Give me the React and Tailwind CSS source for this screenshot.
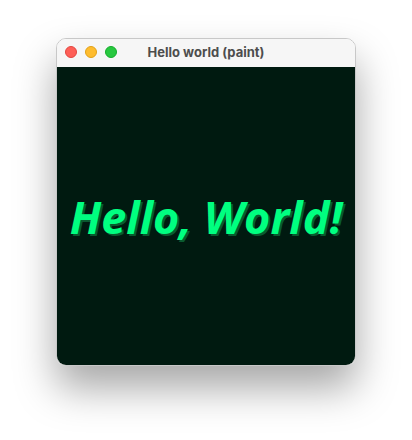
export default function App() {
  return (
    <div className="flex h-[440px] w-[412px] justify-center bg-white pt-[38px]">
      <div className="flex h-[328px] w-[300px] flex-col overflow-hidden rounded-[10px] border border-[#c8c8c8] shadow-[0_22px_40px_rgba(0,0,0,0.35)]">
        <div className="relative flex h-[28px] shrink-0 items-center justify-center bg-[#f6f6f6]">
          <div className="absolute left-[8px] top-[7px] flex gap-[8px]">
            <span className="h-[12px] w-[12px] rounded-full border border-[#e2463f] bg-[#fe5f57]" />
            <span className="h-[12px] w-[12px] rounded-full border border-[#e1a116] bg-[#febc2e]" />
            <span className="h-[12px] w-[12px] rounded-full border border-[#14ad2a] bg-[#28c840]" />
          </div>
          <span className="text-[13px] font-bold text-[#4d4d4d] [font-family:Inter,sans-serif]">
            Hello world (paint)
          </span>
        </div>
        <div className="flex flex-1 items-center justify-center bg-[#001a10]">
          <span className="text-[45px] font-bold italic leading-none text-[#00ff80] [font-family:'Open_Sans',sans-serif] [text-shadow:2px_2px_0_#0a5a30]">
            Hello, World!
          </span>
        </div>
      </div>
    </div>
  );
}
